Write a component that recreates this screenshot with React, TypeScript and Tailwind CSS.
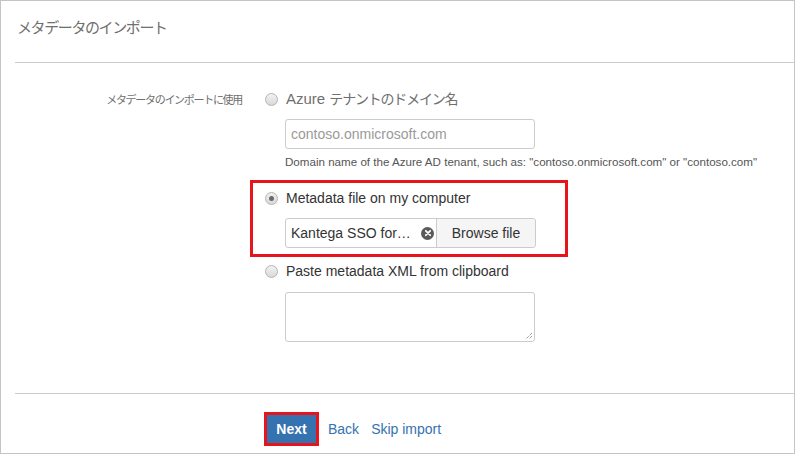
import React from "react";

const latin = { fontFamily: '"Liberation Sans", Arial, sans-serif' };
const jp = { fontFamily: '"Noto Sans CJK JP", "Noto Sans", sans-serif' };

function Radio({ checked = false }: { checked?: boolean }) {
  return (
    <div className="w-[13px] h-[13px] rounded-full border border-[#b4b4b4] bg-gradient-to-b from-[#f2f2f2] to-[#d9d9d9] flex items-center justify-center shrink-0">
      {checked && <div className="w-[5px] h-[5px] rounded-full bg-[#6a6a6a]" />}
    </div>
  );
}

export default function App() {
  return (
    <div className="relative w-[795px] h-[454px] bg-white border border-[#c4c4c4] overflow-hidden" style={latin}>
      {/* Title */}
      <div className="h-[61px] pl-[16px] pt-[14px]">
        <div className="text-[15px] leading-[24px] tracking-[-1.4px] text-[#707070]" style={jp}>
          メタデータのインポート
        </div>
      </div>
      <div className="ml-[14px] h-px bg-[#cccccc]" />

      {/* Form */}
      <div className="h-[330px] pt-[26px] flex">
        <div className="w-[241px] shrink-0 h-[20px] flex items-center justify-end">
          <span className="text-[11px] tracking-[-1.3px] text-[#707070]" style={jp}>
            メタデータのインポートに使用
          </span>
        </div>
        <div className="pl-[23px] flex flex-col">
          <div className="h-[20px] flex items-center gap-[8px]">
            <Radio />
            <span className="text-[15px] text-[#6f6f6f] whitespace-nowrap">
              Azure{" "}
              <span className="text-[14px] tracking-[-1.2px]" style={jp}>
                テナントのドメイン名
              </span>
            </span>
          </div>
          <div className="ml-[20px] mt-[10px] w-[250px] h-[30px] border border-[#cccccc] rounded-[3px] flex items-center px-[5px] text-[14px] text-[#9a9a9a]">
            contoso.onmicrosoft.com
          </div>
          <div className="ml-[20px] mt-[5px] text-[11.6px] leading-[16px] text-[#555555] whitespace-nowrap">
            Domain name of the Azure AD tenant, such as: "contoso.onmicrosoft.com" or "contoso.com"
          </div>

          <div className="mt-[18px] h-[20px] flex items-center gap-[8px]">
            <Radio checked />
            <span className="text-[14px] text-[#333333]">Metadata file on my computer</span>
          </div>
          <div className="ml-[20px] mt-[10px] w-[251px] h-[30px] border border-[#cccccc] rounded-[3px] flex items-stretch text-[14px] text-[#333333]">
            <div className="flex-1 flex items-center pl-[5px] pr-[2px] justify-between">
              <span>Kantega SSO for…</span>
              <div className="w-[13px] h-[13px] rounded-full bg-[#5a5a5a] flex items-center justify-center">
                <svg width="8" height="8" viewBox="0 0 8 8">
                  <path d="M1.8 1.8 L6.2 6.2 M6.2 1.8 L1.8 6.2" stroke="white" strokeWidth="1.8" strokeLinecap="round" />
                </svg>
              </div>
            </div>
            <div className="w-[99px] border-l border-[#cccccc] bg-[#f5f5f5] rounded-r-[3px] flex items-center justify-center">
              Browse file
            </div>
          </div>

          <div className="mt-[13px] h-[20px] flex items-center gap-[8px]">
            <Radio />
            <span className="text-[14px] text-[#333333]">Paste metadata XML from clipboard</span>
          </div>
          <div className="relative ml-[20px] mt-[11px] w-[250px] h-[50px] border border-[#cccccc] rounded-[3px]">
            <svg className="absolute right-[1px] bottom-[1px]" width="9" height="9" viewBox="0 0 9 9">
              <path d="M8 2 L2 8 M8 5 L5 8" stroke="#777" strokeWidth="1" strokeDasharray="1 1" />
            </svg>
          </div>
        </div>
      </div>

      <div className="ml-[14px] h-px bg-[#cccccc]" />

      {/* Buttons */}
      <div className="pt-[21px] pl-[266px] flex items-center text-[14px]">
        <div className="w-[49px] h-[28px] bg-[#3572b0] text-white font-bold flex items-center justify-center">
          Next
        </div>
        <span className="ml-[12px] text-[#3572b0]">Back</span>
        <span className="ml-[12px] text-[#3572b0]">Skip import</span>
      </div>

      {/* Annotation boxes */}
      <div className="absolute left-[249px] top-[179px] w-[318px] h-[77px] border-[3px] border-[#e8141c]" />
      <div className="absolute left-[263px] top-[411px] w-[55px] h-[34px] border-[3px] border-[#e8141c]" />
    </div>
  );
}
